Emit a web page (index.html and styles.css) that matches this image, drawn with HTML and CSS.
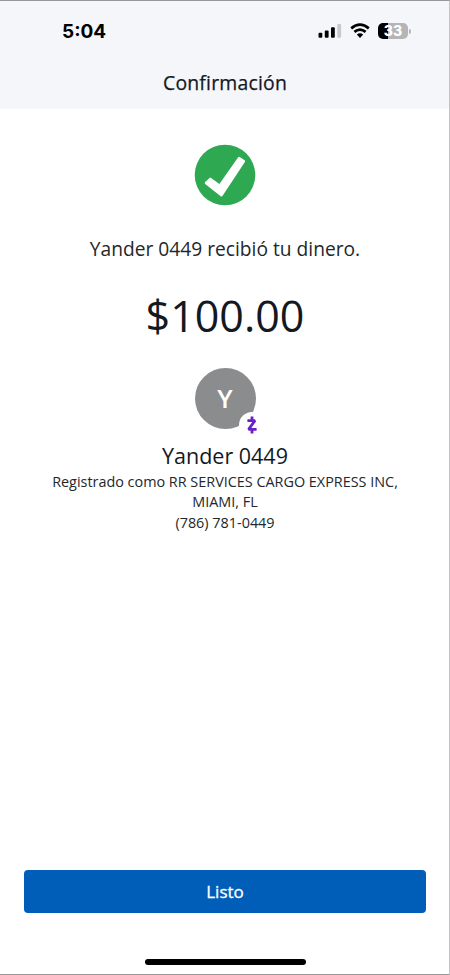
FILE: index.html
```
<!DOCTYPE html>
<html lang="es">
<head>
<meta charset="utf-8">
<title>Confirmación</title>
<link rel="stylesheet" href="styles.css">
</head>
<body>
<div class="screen">
  <header class="header">
    <div class="status-bar">
      <span class="time">5:04</span>
      <div class="status-icons">
        <svg class="signal" width="24" height="16" viewBox="0 0 24 16">
          <rect x="0.5" y="9.8" width="3.8" height="5" rx="1"/>
          <rect x="6.8" y="7.5" width="3.8" height="7.3" rx="1"/>
          <rect x="13" y="4.3" width="3.8" height="10.5" rx="1"/>
          <rect class="faint" x="19.3" y="1" width="3.8" height="13.8" rx="1"/>
        </svg>
        <svg class="wifi" width="20" height="16" viewBox="0 0 20 16">
          <path d="M1.2 5.4Q10-2 18.8 5.4M4.4 8.9Q10 4.2 15.6 8.9"/>
          <path class="dot" d="M6.8 11.6Q10 9 13.2 11.6L10 14.9Z"/>
        </svg>
        <div class="battery"><span class="level">33</span><i class="tip"></i></div>
      </div>
    </div>
    <h1 class="title">Confirmación</h1>
  </header>
  <main class="content">
    <svg class="check" width="62" height="62" viewBox="0 0 62 62">
      <circle cx="31" cy="31" r="30.3"/>
      <path d="M11.1 38.1L15.6 34Q16.3 33.3 17.1 33.9L25.4 40.1L44 13.5Q44.8 12.4 45.8 13.1L50.6 16.2Q51.6 16.9 50.9 17.9L28.4 51.9Q27.7 53 26.7 52.2L11.2 40Q10.1 39.1 11.1 38.1Z"/>
    </svg>
    <p class="message">Yander 0449 recibió tu dinero.</p>
    <p class="amount">$100.00</p>
    <div class="avatar">Y
      <span class="badge">
        <svg width="12" height="20" viewBox="0 0 12 20">
          <path d="M1.4 5.6H9L2.6 14.4H10.6M6 1.5V5M6 15V18.5"/>
        </svg>
      </span>
    </div>
    <h2 class="name">Yander 0449</h2>
    <p class="details">Registrado como RR SERVICES CARGO EXPRESS INC,<br>MIAMI, FL<br>(786) 781-0449</p>
  </main>
  <footer class="footer">
    <button class="done">Listo</button>
    <div class="home-indicator"></div>
  </footer>
</div>
</body>
</html>
```
FILE: styles.css
```
* { box-sizing: border-box; margin: 0; padding: 0; }

body {
  background: #fff;
  color: #14191f;
  font-family: "Open Sans", sans-serif;
}

.screen {
  display: flex;
  flex-direction: column;
  width: 450px;
  height: 975px;
  border: solid #97979a;
  border-width: 1px 1px 1px 0;
  border-right-color: #c4c4c6;
}

.header { height: 108px; background: #f5f6f9; }

.status-bar {
  display: flex;
  justify-content: space-between;
  align-items: center;
  height: 60px;
  padding: 0 41px 0 62px;
}

.time {
  padding-top: 2px;
  color: #000;
  font: 700 19px/24px Inter, sans-serif;
}

.status-icons { display: flex; align-items: center; }
.signal .faint { fill: #c7c8cb; }
.wifi { margin: 0 8px; fill: none; stroke: #000; stroke-width: 2.7; }
.wifi .dot { fill: #000; stroke: none; }

.battery {
  position: relative;
  width: 30px;
  height: 16px;
  border-radius: 5px;
  background: linear-gradient(90deg, #000 33%, #b5b5b7 33%);
  color: #fff;
  font: 800 14px/16px Inter, sans-serif;
  text-align: center;
}

.tip {
  position: absolute;
  top: 6px;
  right: -3px;
  width: 2px;
  height: 5px;
  border-radius: 0 2px 2px 0;
  background: #b5b5b7;
}

.title {
  height: 44px;
  padding-left: 1px;
  font-size: 19.4px;
  font-weight: 500;
  letter-spacing: 0.2px;
  line-height: 44px;
  text-align: center;
  -webkit-text-stroke: 0.25px currentColor;
}

.content {
  display: flex;
  flex: 1;
  flex-direction: column;
  align-items: center;
  padding: 35px 0 0 1px;
  text-align: center;
}

.check { fill: #2ea952; }
.check path { fill: #fff; }

.message { margin-top: 28px; font-size: 19.2px; line-height: 30px; color: #23272c; }
.amount { margin-top: 21px; font-size: 43px; line-height: 62px; }

.avatar {
  position: relative;
  width: 61px;
  height: 61px;
  margin-top: 21px;
  border-radius: 50%;
  background: #8b8c8e;
  color: #fff;
  font-size: 26px;
  font-weight: 600;
  line-height: 61px;
}

.badge {
  position: absolute;
  left: 44px;
  top: 44px;
  display: flex;
  align-items: center;
  justify-content: center;
  width: 26px;
  height: 26px;
  border-radius: 50%;
  background: #fff;
}

.badge svg { fill: none; stroke: #6b1fc7; stroke-width: 2.8; stroke-linejoin: bevel; }

.name { margin-top: 11px; font-size: 21.5px; font-weight: 400; line-height: 31px; }
.details { margin-top: 1px; font-size: 14.4px; line-height: 20.3px; color: #23272c; }

.footer {
  display: flex;
  flex-direction: column;
  align-items: center;
  height: 104px;
  padding-left: 1px;
}

.done {
  width: 402px;
  height: 43px;
  border: 0;
  border-radius: 4px;
  background: #005eb8;
  color: #fff;
  font: 500 17px/43px "Open Sans", sans-serif;
  -webkit-text-stroke: 0.3px currentColor;
}

.home-indicator {
  width: 161px;
  height: 6px;
  margin-top: 46px;
  border-radius: 3px;
  background: #000;
}
```
